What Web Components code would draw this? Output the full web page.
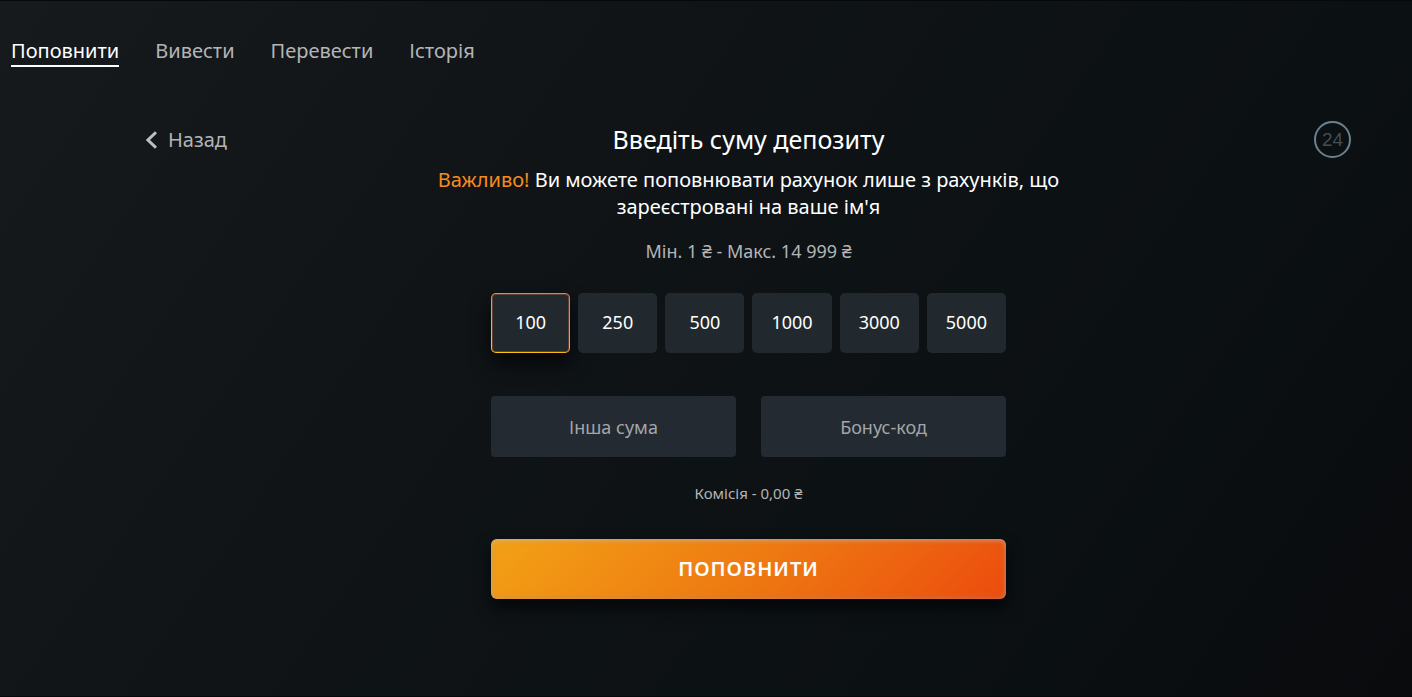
<!DOCTYPE html>
<html lang="uk">
<head>
<meta charset="utf-8">
<meta name="viewport" content="width=device-width, initial-scale=1">
<title>Поповнити</title>
<style>
  html { min-height: 100%; background: #0a0b0d; }
  body {
    margin: 0;
    min-height: 100vh;
    box-sizing: border-box;
    border-block: 1px solid #07080a;
    background: linear-gradient(125deg, #161a1d 0%, #101417 35%, #0b1013 75%, #0a0b0d 100%);
    font-family: "Noto Sans", "Open Sans", sans-serif;
    color: #fff;
  }
</style>
</head>
<body>
<wallet-page></wallet-page>

<script>
const define = (name, html, setup) => {
  const template = document.createElement('template');
  template.innerHTML = html;
  customElements.define(name, class extends HTMLElement {
    connectedCallback() {
      if (this.shadowRoot) return;
      this.attachShadow({ mode: 'open' }).append(template.content.cloneNode(true));
      if (setup) setup(this, this.shadowRoot);
    }
  });
};

define('wallet-tab', `
  <style>
    :host { display: block; }
    a {
      display: block; border-bottom: 2px solid transparent;
      color: #b3b5b6; font-size: 20px; line-height: 28px; text-decoration: none;
    }
    :host([active]) a { color: #fff; border-color: #fff; }
  </style>
  <a href="#"><slot></slot></a>`,
  (host, root) => {
    if (host.hasAttribute('active')) root.querySelector('a').setAttribute('aria-current', 'page');
  });

define('wallet-tabs', `
  <style>
    :host { display: block; }
    nav { display: flex; flex-wrap: wrap; gap: 36px; padding: 36px 11px 0; }
  </style>
  <nav><slot></slot></nav>`);

define('back-link', `
  <style>
    :host { display: block; }
    a {
      display: inline-flex; align-items: center; gap: 10px;
      color: #b3b5b6; font-size: 20px; line-height: 28px; text-decoration: none;
    }
    svg { display: block; }
  </style>
  <a href="#">
    <svg width="12" height="18" viewBox="0 0 12 18" fill="none" stroke="#bcbebf" stroke-width="3" aria-hidden="true"><path d="M10 1.2 2 9l8 7.8"/></svg>
    <slot></slot>
  </a>`);

define('support-badge', `
  <style>
    :host { display: block; }
    button {
      display: grid; place-items: center; width: 37px; height: 37px; padding: 0;
      border: 2px solid #6b8190; border-radius: 50%; background: none;
      color: #444d55; font: 19px/20px "Liberation Sans", Arial, sans-serif;
    }
  </style>
  <button type="button"><slot></slot></button>`);

define('amount-chip', `
  <style>
    :host { display: block; }
    button {
      width: 100%; height: 60px; padding: 0 0 2px; border: 1px solid transparent; border-radius: 5px;
      background: #22292e border-box; color: #fff; font: 18px/24px "Noto Sans", "Open Sans", sans-serif;
    }
    :host([selected]) button {
      background: linear-gradient(#22292e, #22292e) padding-box,
                  linear-gradient(15deg, #ffcb05, #f7793f 90%) border-box;
      box-shadow: 0 10px 20px rgba(0, 0, 0, .7), inset 0 0 0 1px rgba(247, 121, 63, .3);
    }
  </style>
  <button type="button"><slot></slot></button>`,
  (host, root) => {
    root.querySelector('button').setAttribute('aria-pressed', host.hasAttribute('selected'));
  });

define('text-field', `
  <style>
    :host { display: block; }
    input {
      display: block; box-sizing: border-box; width: 100%; height: 61px; padding: 0 10px;
      border: 0; border-radius: 4px; background: #232a31; color: #fff; text-align: center;
      font: 18px/24px "Noto Sans", "Open Sans", sans-serif;
    }
    input::placeholder { color: #a3a6a8; opacity: 1; }
  </style>
  <input type="text">`,
  (host, root) => {
    const input = root.querySelector('input');
    input.placeholder = host.getAttribute('label');
    input.setAttribute('aria-label', host.getAttribute('label'));
  });

define('submit-button', `
  <style>
    :host { display: block; }
    button {
      display: block; width: 100%; height: 60px; padding: 0; border: 0; border-radius: 6px;
      background: linear-gradient(135deg, #f3a115, #ee7a12 50%, #ec4c0e);
      box-shadow: 0 8px 16px rgba(0, 0, 0, .7), inset 0 2px 4px rgba(230, 230, 230, .25), inset 0 0 6px rgba(150, 150, 150, .5);
      color: #fff; font: 600 20px/28px "Noto Sans", "Open Sans", sans-serif;
      letter-spacing: 1px; text-transform: uppercase;
    }
  </style>
  <button type="submit"><slot></slot></button>`);

define('deposit-form', `
  <style>
    :host { display: block; }
    h1, p { margin: 0; font-weight: 400; text-align: center; }
    h1 { font-size: 25px; line-height: 36px; }
    .notice { margin-top: 9px; font-size: 20px; line-height: 27px; }
    .notice strong { color: #f78b1e; font-weight: 400; }
    .limits { margin-top: 19px; color: #b3b5b6; font-size: 18px; line-height: 24px; }
    form { max-width: 515px; margin: 30px auto 0; }
    .amounts { display: grid; grid-template-columns: repeat(6, 1fr); gap: 8px; }
    .fields { display: grid; grid-template-columns: 1fr 1fr; gap: 25px; margin-top: 43px; }
    .fee { margin: 26px 0 36px; color: #b3b5b6; font-size: 15px; line-height: 20px; }
  </style>
  <h1>Введіть суму депозиту</h1>
  <p class="notice"><strong>Важливо!</strong> Ви можете поповнювати рахунок лише з рахунків, що зареєстровані на ваше ім'я</p>
  <p class="limits">Мін. 1 ₴ - Макс. 14 999 ₴</p>
  <form>
    <div class="amounts">
      <amount-chip selected>100</amount-chip>
      <amount-chip>250</amount-chip>
      <amount-chip>500</amount-chip>
      <amount-chip>1000</amount-chip>
      <amount-chip>3000</amount-chip>
      <amount-chip>5000</amount-chip>
    </div>
    <div class="fields">
      <text-field label="Інша сума"></text-field>
      <text-field label="Бонус-код"></text-field>
    </div>
    <p class="fee">Комісія - 0,00 ₴</p>
    <submit-button>Поповнити</submit-button>
  </form>`);

define('wallet-page', `
  <style>
    :host { display: block; }
    main {
      display: grid; grid-template-columns: minmax(80px, 1fr) minmax(0, 646px) minmax(80px, 1fr);
      align-items: start; padding: 54px 61px 40px 146px;
    }
    back-link { margin-top: 5px; }
    support-badge { justify-self: end; }
  </style>
  <wallet-tabs>
    <wallet-tab active>Поповнити</wallet-tab>
    <wallet-tab>Вивести</wallet-tab>
    <wallet-tab>Перевести</wallet-tab>
    <wallet-tab>Історія</wallet-tab>
  </wallet-tabs>
  <main>
    <back-link>Назад</back-link>
    <deposit-form></deposit-form>
    <support-badge>24</support-badge>
  </main>`);
</script>
</body>
</html>
